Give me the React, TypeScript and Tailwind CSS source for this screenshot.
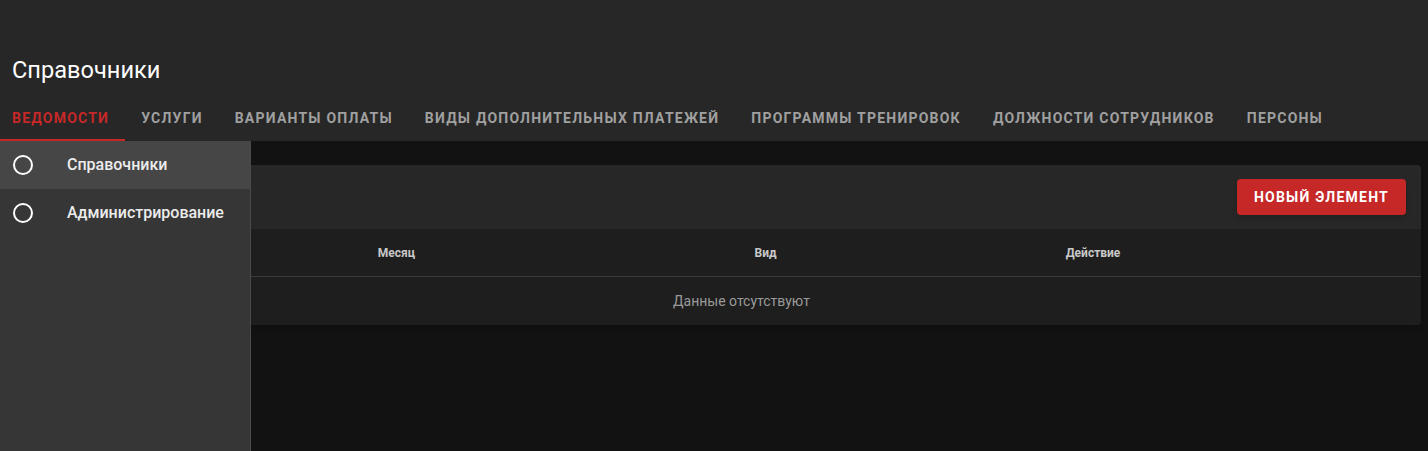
import React from 'react';

const tabs = [
  'Ведомости',
  'Услуги',
  'Варианты оплаты',
  'Виды дополнительных платежей',
  'Программы тренировок',
  'Должности сотрудников',
  'Персоны',
];

const menu = ['Справочники', 'Администрирование'];

const CircleIcon: React.FC = () => (
  <svg width="24" height="24" viewBox="0 0 24 24" className="shrink-0">
    <circle cx="12" cy="12" r="9" fill="none" stroke="#ffffff" strokeWidth="2" />
  </svg>
);

export default function App() {
  return (
    <div className="relative flex h-[451px] w-[1428px] flex-col overflow-hidden bg-[#121212] font-['Roboto',sans-serif]">
      {/* Top bar */}
      <header className="bg-[#272727]">
        <div className="h-[93px] pl-3 pt-[54px]">
          <h1 className="text-[23.6px] leading-8 text-white">Справочники</h1>
        </div>
        <nav className="flex h-12 overflow-hidden">
          {tabs.map((tab, i) => (
            <div
              key={tab}
              className={`relative flex shrink-0 items-center pt-px text-sm font-bold uppercase tracking-[1.23px] ${
                i === 0 ? 'pl-3 pr-4 text-[#c62828]' : 'px-4 text-[#a0a0a0]'
              }`}
            >
              {tab}
              {i === 0 && <span className="absolute bottom-0 left-0 right-0 h-0.5 bg-[#c62828]" />}
            </div>
          ))}
        </nav>
      </header>

      {/* Main content */}
      <main className="flex-1 pl-[62px] pr-[7px] pt-6">
        <div className="overflow-hidden rounded bg-[#1e1e1e] shadow-md">
          <div className="flex h-16 items-center justify-end bg-[#272727] pr-[15px]">
            <button className="h-9 rounded bg-[#c62828] px-[17px] text-sm font-bold uppercase tracking-[1.23px] text-white shadow-md">
              Новый элемент
            </button>
          </div>
          <div className="grid h-12 grid-cols-[669px_69px_586px_1fr] items-center border-b border-[#3b3b3b] text-xs font-bold text-[#c8c8c8]">
            <div className="text-center">Месяц</div>
            <div className="text-center">Вид</div>
            <div className="text-center">Действие</div>
            <div />
          </div>
          <div className="flex h-12 items-center justify-center text-sm text-[#9a9a9a]">
            Данные отсутствуют
          </div>
        </div>
      </main>

      {/* Navigation drawer */}
      <aside className="absolute bottom-0 left-0 top-[141px] w-[251px] border-r border-[#4a4a4a] bg-[#363636]">
        {menu.map((item, i) => (
          <div
            key={item}
            className={`flex h-12 items-center gap-[32px] pl-[11px] text-base font-medium text-[#ececec] ${
              i === 0 ? 'bg-[#464646]' : ''
            }`}
          >
            <CircleIcon />
            <span>{item}</span>
          </div>
        ))}
      </aside>
    </div>
  );
}
